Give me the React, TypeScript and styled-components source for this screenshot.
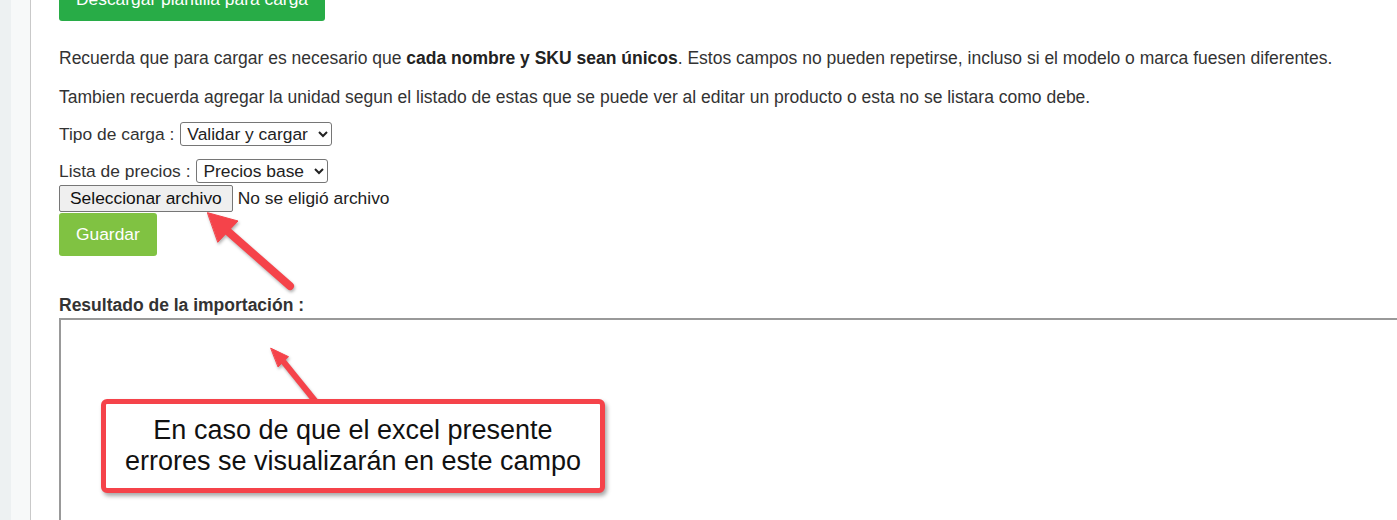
import React from 'react';
import styled, { createGlobalStyle } from 'styled-components';

const GlobalStyle = createGlobalStyle`
    html, body {
        margin: 0;
        padding: 0;
        background: #fff;
        overflow: hidden;
    }
    body {
        font-family: 'Liberation Sans', Arial, sans-serif;
        color: #333;
    }
`;

const RED = '#f5434a';

const Page = styled.div`
    position: relative;
    display: flex;
    width: 1397px;
    height: 520px;
    overflow: hidden;
`;

const SideRail = styled.div`
    width: 11px;
    flex: none;
    background: #edf1f2;
`;

const Gutter = styled.div`
    width: 19px;
    flex: none;
    background: #f7f9f9;
    border-right: 1px solid #c9c9c9;
`;

const Main = styled.div`
    flex: 1;
    min-width: 0;
    padding-left: 28px;
    display: flex;
    flex-direction: column;
    align-items: flex-start;

    & > * {
        flex-shrink: 0;
    }
`;

const Button = styled.button<{ $tone: 'success' | 'lime' }>`
    height: 43px;
    padding: 0 17px;
    border: none;
    border-radius: 3px;
    background: ${({ $tone }) => ($tone === 'success' ? '#28ac47' : '#80c242')};
    color: #fff;
    font-family: 'Liberation Sans', Arial, sans-serif;
    font-size: 17.4px;
    cursor: pointer;
`;

const DownloadButton = styled(Button)`
    margin-top: -22px;
`;

const SaveButton = styled(Button)`
    margin-top: 1px;
`;

const Paragraph = styled.p<{ $first?: boolean }>`
    margin: ${({ $first }) => ($first ? '26px' : '17px')} 0 0;
    font-size: 17.5px;
    line-height: 22px;
    white-space: nowrap;

    b {
        color: #222;
    }
`;

const FieldRow = styled.div<{ $gap: number }>`
    display: flex;
    align-items: center;
    gap: 6px;
    height: 24px;
    margin-top: ${({ $gap }) => $gap}px;
    font-size: 17.4px;
`;

const Select = styled.select`
    height: 24px;
    padding: 0 7px 0 2px;
    border: 1px solid #767676;
    border-radius: 3px;
    background: #fff;
    color: #222;
    font-family: 'Liberation Sans', Arial, sans-serif;
    font-size: 17.4px;
`;

const FileRow = styled.div`
    display: flex;
    align-items: center;
    gap: 5px;
    margin-top: 2px;
    font-size: 17.4px;
`;

const FileButton = styled.button`
    height: 27px;
    padding: 0 10px;
    border: 1px solid #767676;
    border-radius: 2px;
    background: #efefef;
    color: #111;
    font-family: 'Liberation Sans', Arial, sans-serif;
    font-size: 17.4px;
`;

const FileName = styled.span`
    color: #222;
`;

const ResultLabel = styled.div`
    margin-top: 38px;
    font-size: 17.5px;
    font-weight: bold;
    line-height: 22px;
`;

const ResultBox = styled.textarea`
    margin-top: 2px;
    width: 1400px;
    height: 300px;
    border: 2px solid #999;
    resize: none;
    outline: none;
`;

const Overlay = styled.svg`
    position: absolute;
    left: 0;
    top: 0;
    pointer-events: none;
    filter: drop-shadow(1px 2px 1.5px rgba(0, 0, 0, 0.3));
`;

const Callout = styled.div`
    position: absolute;
    left: 101px;
    top: 399px;
    width: 504px;
    height: 94px;
    box-sizing: border-box;
    border: 5px solid ${RED};
    border-radius: 6px;
    background: #fff;
    box-shadow: 2px 3px 4px rgba(0, 0, 0, 0.35);
    display: flex;
    align-items: center;
    justify-content: center;
    text-align: center;
    font-size: 27px;
    line-height: 31px;
    color: #111;
`;

const Arrows = () => (
    <Overlay width="1397" height="520" viewBox="0 0 1397 520">
        <g fill={RED} stroke={RED} strokeLinecap="round" strokeLinejoin="round">
            <line x1="228" y1="231.5" x2="290" y2="286" strokeWidth="8" />
            <polygon points="207.7,212.7 238,221 218,242" strokeWidth="1" />
            <line x1="283.4" y1="361.7" x2="316" y2="402" strokeWidth="6" strokeLinecap="butt" />
            <polygon points="271,348.3 288.5,356.7 278.3,366.7" strokeWidth="1" />
        </g>
    </Overlay>
);

export default function App() {
    return (
        <>
            <GlobalStyle />
            <Page>
                <SideRail />
                <Gutter />
                <Main>
                    <DownloadButton $tone="success">Descargar plantilla para carga</DownloadButton>
                    <Paragraph $first>
                        Recuerda que para cargar es necesario que <b>cada nombre y SKU sean únicos</b>. Estos campos no
                        pueden repetirse, incluso si el modelo o marca fuesen diferentes.
                    </Paragraph>
                    <Paragraph>
                        Tambien recuerda agregar la unidad segun el listado de estas que se puede ver al editar un
                        producto o esta no se listara como debe.
                    </Paragraph>
                    <FieldRow $gap={14}>
                        <span>Tipo de carga :</span>
                        <Select defaultValue="validar">
                            <option value="validar">Validar y cargar</option>
                            <option value="solo">Solo validar</option>
                        </Select>
                    </FieldRow>
                    <FieldRow $gap={13}>
                        <span>Lista de precios :</span>
                        <Select defaultValue="base">
                            <option value="base">Precios base</option>
                        </Select>
                    </FieldRow>
                    <FileRow>
                        <FileButton>Seleccionar archivo</FileButton>
                        <FileName>No se eligió archivo</FileName>
                    </FileRow>
                    <SaveButton $tone="lime">Guardar</SaveButton>
                    <ResultLabel>Resultado de la importación :</ResultLabel>
                    <ResultBox readOnly />
                </Main>
                <Arrows />
                <Callout>
                    En caso de que el excel presente
                    <br />
                    errores se visualizarán en este campo
                </Callout>
            </Page>
        </>
    );
}
